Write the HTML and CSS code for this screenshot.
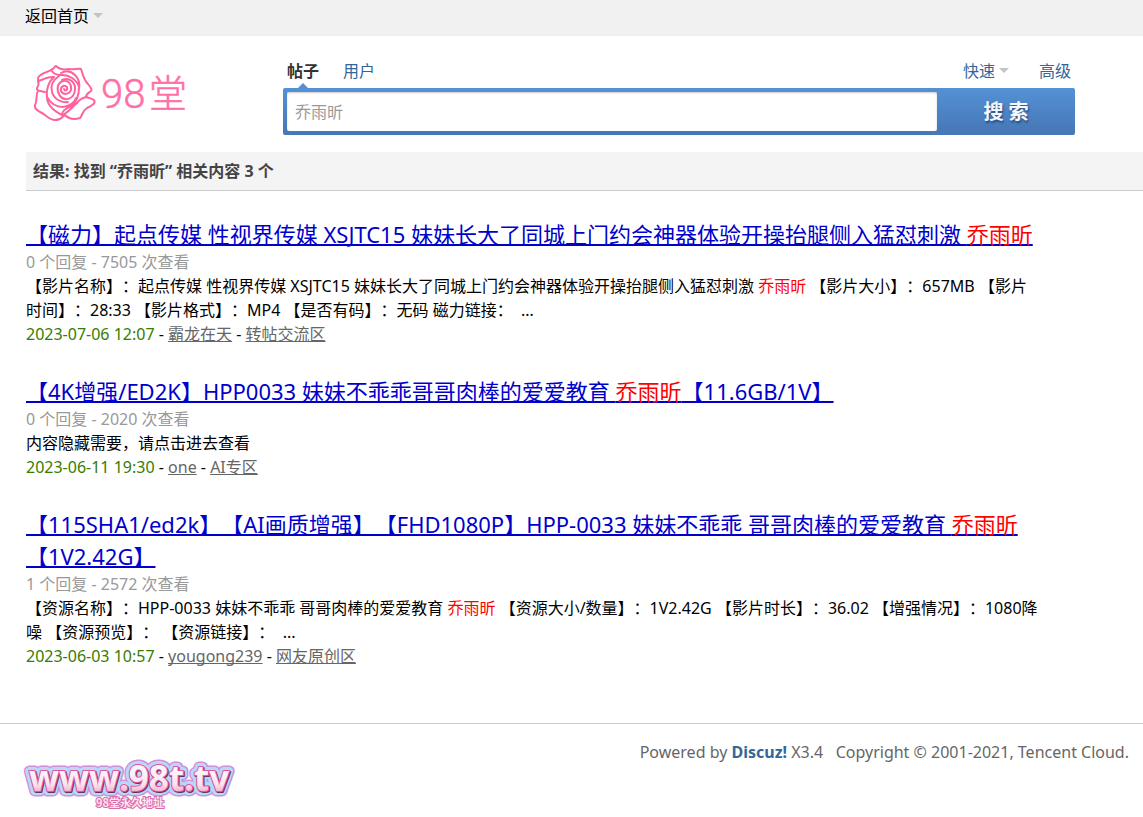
FILE: index.html
```html
<!DOCTYPE html>
<html lang="zh-CN">
<head>
<meta charset="utf-8">
<meta name="viewport" content="width=device-width, initial-scale=1">
<title>搜索 - 98堂</title>
<link rel="stylesheet" href="styles.css">
</head>
<body>
<nav class="topbar"><a class="home" href="#">返回首页<span class="caret"></span></a></nav>
<header class="header">
  <a class="logo" href="#" aria-label="98堂">
    <svg width="156" height="60" viewBox="32 62 156 60">
      <g class="rose">
        <path d="M51 69C54 68 54 66 56 65C59 68 64 69 69 68C73 69 78 67 81 68C83 73 83 78 88 83C92 88 92 89 91 90C88 92 86 93 86 96"/>
        <path d="M51 69C46 72 40 72 38 77C38 80 40 83 37 87C36 90 41 90 45 91M38 90C35 94 38 99 35 104C34 108 37 109 40 111C45 113 48 118 54 119C60 120 63 115 65 114C69 118 74 119 80 117C83 114 81 111 87 107C93 104 96 102 94 99C91 97 88 97 86 96C82 97 79 99 77 102"/>
        <path d="M51 69C53 72 56 74 60 74C69 73 77 79 79 86C79 95 77 101 71 105C65 108 62 110 62 114C54 110 47 105 47 96C46 90 48 81 54 76M54 76C47 75 44 79 38 80M61 72C66 69 71 70 75 74C79 78 80 83 79 88M47 96C51 103 56 106 63 106C70 105 74 102 76 97M59 75C53 79 50 84 52 91C54 98 61 102 68 101M62 79C69 76 76 81 75 89C74 98 65 101 60 95C56 89 57 82 63 80C69 79 72 84 71 89C69 94 63 94 61 90C60 86 64 83 67 86C68 89 65 91 64 88M62 114C68 112 72 106 77 102"/>
      </g>
      <text class="logo-number" x="101" y="107">98</text>
      <text class="logo-word" x="149" y="106">堂</text>
    </svg>
  </a>
  <form class="search" onsubmit="return false">
    <div class="tabs">
      <a class="tab active" href="#">帖子</a>
      <a class="tab" href="#">用户</a>
      <a class="tab quick" href="#">快速<span class="caret"></span></a>
      <a class="tab" href="#">高级</a>
    </div>
    <div class="box">
      <input class="query" type="text" aria-label="搜索内容" value="乔雨昕">
      <button class="submit" type="submit">搜 索</button>
    </div>
  </form>
</header>
<main class="main">
  <h2 class="summary">结果: 找到 “乔雨昕” 相关内容 3 个</h2>
  <ul class="results">
    <li>
      <h3 class="title"><a href="#">【磁力】起点传媒 性视界传媒 XSJTC15 妹妹长大了同城上门约会神器体验开操抬腿侧入猛怼刺激 <em>乔雨昕</em></a></h3>
      <p class="stats">0 个回复 - 7505 次查看</p>
      <p>【影片名称】：起点传媒 性视界传媒 XSJTC15 妹妹长大了同城上门约会神器体验开操抬腿侧入猛怼刺激 <em>乔雨昕</em> 【影片大小】：657MB 【影片时间】：28:33 【影片格式】：MP4 【是否有码】：无码 磁力链接：&nbsp; ...</p>
      <p><time>2023-07-06 12:07</time> - <a class="source" href="#">霸龙在天</a> - <a class="source" href="#">转帖交流区</a></p>
    </li>
    <li>
      <h3 class="title"><a href="#">【4K增强/ED2K】HPP0033 妹妹不乖乖哥哥肉棒的爱爱教育 <em>乔雨昕</em>【11.6GB/1V】</a></h3>
      <p class="stats">0 个回复 - 2020 次查看</p>
      <p>内容隐藏需要，请点击进去查看</p>
      <p><time>2023-06-11 19:30</time> - <a class="source" href="#">one</a> - <a class="source" href="#">AI专区</a></p>
    </li>
    <li>
      <h3 class="title"><a href="#">【115SHA1/ed2k】【AI画质增强】【FHD1080P】HPP-0033 妹妹不乖乖 哥哥肉棒的爱爱教育 <em>乔雨昕</em>【1V2.42G】</a></h3>
      <p class="stats">1 个回复 - 2572 次查看</p>
      <p>【资源名称】：HPP-0033 妹妹不乖乖 哥哥肉棒的爱爱教育 <em>乔雨昕</em> 【资源大小/数量】：1V2.42G 【影片时长】：36.02 【增强情况】：1080降噪 【资源预览】： 【资源链接】：&nbsp; ...</p>
      <p><time>2023-06-03 10:57</time> - <a class="source" href="#">yougong239</a> - <a class="source" href="#">网友原创区</a></p>
    </li>
  </ul>
</main>
<footer class="footer">
  <a class="address" href="#" aria-label="www.98t.tv 98堂永久地址">
    <svg width="220" height="60" viewBox="0 0 220 60">
      <defs>
        <linearGradient id="candy" x1="0" y1="0" x2="0" y2="1"><stop offset="0.4" stop-color="#fbf3fa"/><stop offset="0.65" stop-color="#fbe3ee"/><stop offset="0.85" stop-color="#f79cc4"/></linearGradient>
      </defs>
      <g class="url">
        <text class="rim" x="6" y="38">www.98t.tv</text>
        <text class="halo" x="6" y="38" aria-hidden="true">www.98t.tv</text>
        <text class="shade" x="7" y="39" aria-hidden="true">www.98t.tv</text>
        <text class="face" x="6" y="38" fill="url(#candy)" aria-hidden="true">www.98t.tv</text>
      </g>
      <text class="caption" x="73" y="54">98堂永久地址</text>
    </svg>
  </a>
  <p class="copyright">Powered by <a href="#">Discuz!</a> X3.4 &nbsp; Copyright © 2001-2021, Tencent Cloud.</p>
</footer>
</body>
</html>
```
FILE: styles.css
```css
* { box-sizing: border-box; }
body {
  margin: 0;
  background: #fff;
  color: #000;
  font: 16px/24px "Noto Sans", "Noto Sans CJK SC", sans-serif;
  text-spacing-trim: space-all;
}
h2, h3, p, ul { margin: 0; padding: 0; }
a { color: inherit; text-decoration: none; }
em { color: #f00; font-style: normal; }
.caret {
  display: inline-block;
  margin-left: 4px;
  border: 5px solid transparent;
  border-top-color: #c4c4c4;
  border-bottom: 0;
  vertical-align: 4px;
}
.topbar { height: 36px; padding: 4px 25px; background: #f1f1f1; border-bottom: 1px solid #eee; }
.header { display: flex; align-items: flex-start; padding: 23px 68px 17px 32px; }
.logo { flex: none; width: 251px; padding-top: 4px; }
.logo svg { display: block; }
.rose { fill: none; stroke: #ff629e; stroke-width: 2; stroke-linecap: round; stroke-linejoin: round; }
.logo-number, .logo-word { fill: #ff6fa7; stroke: #ff6fa7; stroke-width: 0.5; }
.logo-number { font: 300 40px Roboto, sans-serif; }
.logo-word { font: 300 38px "Noto Sans CJK SC", sans-serif; }
.search { flex: 1; }
.tabs { display: flex; gap: 24px; height: 29px; padding: 0 4px; color: #369; }
.tab.active { position: relative; color: #333; font-weight: 700; }
.tab.active::after {
  content: "";
  position: absolute;
  left: 11px;
  bottom: 0;
  border: 5px solid transparent;
  border-bottom-color: #5290d6;
  border-top: 0;
}
.quick { margin-left: auto; margin-right: 6px; }
.box {
  display: flex;
  height: 47px;
  padding: 4px 0 4px 4px;
  border-radius: 2px;
  background: linear-gradient(#5491d5, #4676b5);
}
.query {
  flex: 1;
  min-width: 0;
  padding: 0 8px;
  border: 0;
  border-radius: 2px;
  background: #fff;
  box-shadow: inset 0 1px 2px #ccc;
  color: #999;
  font: inherit;
}
.submit {
  width: 138px;
  padding: 0;
  border: 0;
  background: none;
  color: #f4f8ff;
  font: 700 20px/24px "Noto Sans", "Noto Sans CJK SC", sans-serif;
  text-shadow: 1px 2px 2px #294f7d;
}
.main { padding-left: 26px; }
.summary {
  padding: 7px;
  border-bottom: 1px solid #ccc;
  background: #f4f4f4;
  color: #444;
  font-size: 16px;
  line-height: 24px;
}
.results { max-width: 1028px; padding: 27px 0 55px; list-style: none; }
.results p { max-width: 1014px; }
.results li + li { margin-top: 29px; }
.title { color: #00c; font-size: 22px; font-weight: 400; line-height: 32px; }
.title a { text-decoration: underline; text-decoration-thickness: 2px; text-decoration-skip-ink: none; }
.stats { color: #999; }
time { color: #367d00; }
.source { color: #666; text-decoration: underline; text-decoration-skip-ink: none; }
.footer {
  display: flex;
  align-items: flex-start;
  justify-content: space-between;
  padding: 16px 14px 0 23px;
  border-top: 1px solid #ccc;
}
.address { padding-top: 13px; }
.address svg { display: block; }
.url { font: 700 35px "Open Sans", sans-serif; stroke-linejoin: round; }
.rim { fill: #ce91dc; stroke: #ce91dc; stroke-width: 11; }
.halo { fill: #b8d7fa; stroke: #b8d7fa; stroke-width: 8; }
.shade { fill: #64335f; stroke: #64335f; stroke-width: 2; }
.face { stroke: #e8549a; stroke-width: 2; paint-order: stroke; }
.caption {
  fill: #fce6f2;
  stroke: #dc69a9;
  stroke-width: 2;
  paint-order: stroke;
  font: 700 11px "Noto Sans CJK SC", sans-serif;
}
.copyright { color: #666; }
.copyright a { color: #369; font-weight: 700; }
```
